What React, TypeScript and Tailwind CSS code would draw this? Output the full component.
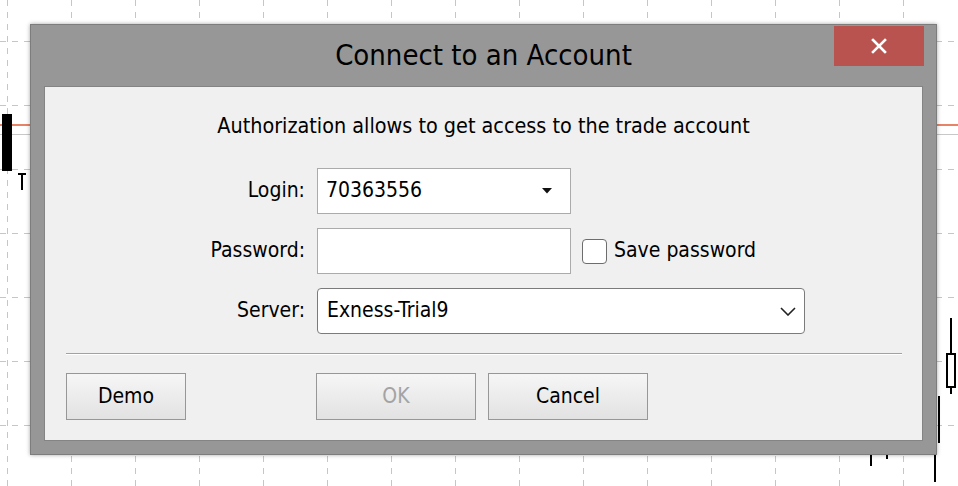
import React from "react";

const FONT = "font-['DejaVu_Sans_Condensed','DejaVu_Sans',sans-serif]";

function ChartBackground() {
  const cols = Array.from({ length: 15 }, (_, i) => 7 + i * 64);
  const rows = Array.from({ length: 7 }, (_, i) => 41 + i * 64);

  return (
    <svg className="absolute inset-0" width={958} height={486} viewBox="0 0 958 486">
      {cols.map((x) => (
        <line key={`v${x}`} x1={x + 0.5} y1={0} x2={x + 0.5} y2={486} stroke="#c6c6c6" strokeDasharray="6 6" />
      ))}
      {rows.map((y) => (
        <line key={`h${y}`} x1={0} y1={y + 0.5} x2={958} y2={y + 0.5} stroke="#c6c6c6" strokeDasharray="6 6" />
      ))}
      <line x1={0} y1={125} x2={958} y2={125} stroke="#df5a33" strokeWidth={1.5} />
      <line x1={0} y1={134.5} x2={958} y2={134.5} stroke="#c8c8c8" />
      {/* left candles */}
      <rect x={2} y={114} width={10} height={57} fill="#000" />
      <line x1={18} y1={174} x2={26} y2={174} stroke="#000" strokeWidth={2} />
      <line x1={22} y1={174} x2={22} y2={190} stroke="#000" strokeWidth={2} />
      {/* right candles */}
      <line x1={951} y1={318} x2={951} y2={394} stroke="#000" strokeWidth={2} />
      <rect x={947} y={354} width={8} height={33} fill="#fff" stroke="#000" strokeWidth={2} />
      <line x1={939} y1={396} x2={939} y2={443} stroke="#000" strokeWidth={2} />
      <line x1={871} y1={455} x2={871} y2={466} stroke="#000" strokeWidth={2} />
      <line x1={887} y1={455} x2={887} y2={459} stroke="#000" strokeWidth={2} />
      <line x1={935} y1={455} x2={935} y2={482} stroke="#000" strokeWidth={2} />
    </svg>
  );
}

function FieldLabel({ children }: { children: React.ReactNode }) {
  return (
    <span className="flex h-[46px] items-center justify-end text-[21px] text-black">{children}</span>
  );
}

function DialogButton({
  label,
  width,
  disabled,
}: {
  label: string;
  width: string;
  disabled?: boolean;
}) {
  return (
    <button
      type="button"
      disabled={disabled}
      className={`${width} h-[47px] border border-[#979797] bg-gradient-to-b from-[#f6f6f6] to-[#e2e2e2] text-[21px] ${
        disabled ? "text-[#a3a3a3]" : "text-black"
      }`}
    >
      {label}
    </button>
  );
}

export default function App() {
  return (
    <div className={`relative h-[486px] w-[958px] overflow-hidden bg-white ${FONT}`}>
      <ChartBackground />

      <div className="absolute left-[30px] top-[24px] w-[907px] border border-[#7d7d7d] bg-[#979797] px-[13px] pb-[13px] shadow-[0_0_4px_rgba(0,0,0,0.35)]">
        <div className="relative flex h-[61px] items-center justify-center">
          <h1 className="text-[29px] leading-none text-black">Connect to an Account</h1>
          <button
            type="button"
            className="absolute right-[-1px] top-[1px] flex h-[40px] w-[90px] items-center justify-center bg-[#b9534f]"
          >
            <svg width={16} height={16} viewBox="0 0 16 16">
              <path d="M2 2 L14 14 M14 2 L2 14" stroke="#fff" strokeWidth={2.6} strokeLinecap="square" />
            </svg>
          </button>
        </div>

        <div className="flex flex-col border border-[#848484] bg-[#f0f0f0] pb-[20px] pt-[26px]">
          <p className="text-center text-[21.4px] leading-[26px] text-black">
            Authorization allows to get access to the trade account
          </p>

          <div className="mt-[29px] grid grid-cols-[260px_1fr] gap-x-[12px] gap-y-[14px]">
            <FieldLabel>Login:</FieldLabel>
            <div className="flex h-[46px] w-[254px] items-center justify-between border border-[#ababab] bg-white pl-[8px] pr-[18px] text-[21px] text-black">
              <span>70363556</span>
              <svg width={10} height={6} viewBox="0 0 10 6">
                <path d="M0 0 H10 L5 5.5 Z" fill="#111" />
              </svg>
            </div>

            <FieldLabel>Password:</FieldLabel>
            <div className="flex h-[46px] items-center">
              <div className="h-[46px] w-[254px] border border-[#ababab] bg-white" />
              <span className="ml-[11px] h-[25px] w-[25px] rounded-[4px] border border-[#6d6d6d] bg-white" />
              <span className="ml-[7px] text-[21px] text-black">Save password</span>
            </div>

            <FieldLabel>Server:</FieldLabel>
            <div className="flex h-[46px] w-[488px] items-center justify-between rounded-[4px] border border-[#7b7b7b] bg-white pl-[9px] pr-[8px] text-[21px] text-black">
              <span>Exness-Trial9</span>
              <svg width={16} height={9} viewBox="0 0 16 9">
                <path d="M1 1 L8 8 L15 1" fill="none" stroke="#222" strokeWidth={1.6} />
              </svg>
            </div>
          </div>

          <div className="ml-[21px] mr-[20px] mt-[19px] border-b border-t border-b-white border-t-[#a2a2a2]" />

          <div className="ml-[21px] mt-[18px] flex items-center">
            <DialogButton label="Demo" width="w-[120px]" />
            <div className="ml-[130px] flex gap-[12px]">
              <DialogButton label="OK" width="w-[160px]" disabled />
              <DialogButton label="Cancel" width="w-[160px]" />
            </div>
          </div>
        </div>
      </div>
    </div>
  );
}
